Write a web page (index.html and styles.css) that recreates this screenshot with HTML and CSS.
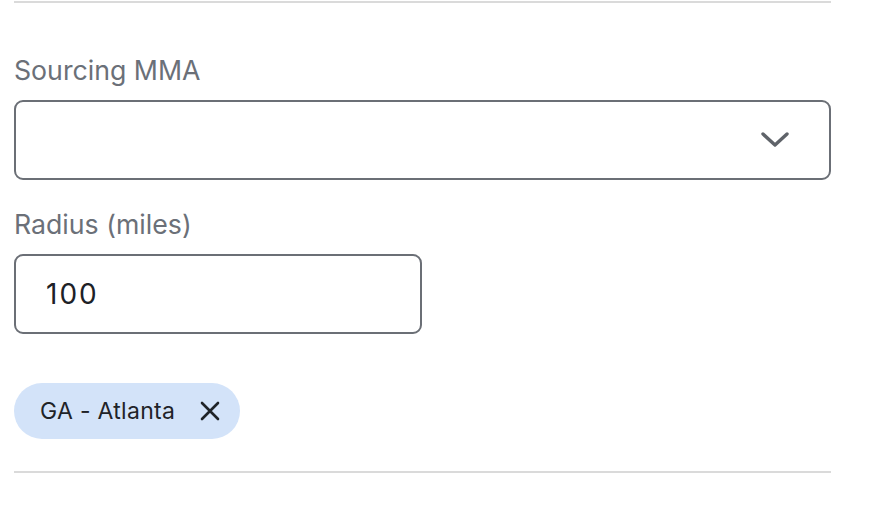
FILE: index.html
```html
<!DOCTYPE html>
<html>
<head>
<meta charset="utf-8">
<link rel="stylesheet" href="styles.css">
</head>
<body>
<div class="panel">
  <hr class="divider top">
  <div class="field first">
    <label class="label">Sourcing MMA</label>
    <div class="select">
      <svg class="chevron" width="30" height="18" viewBox="0 0 30 18"><path d="M3 3 L15 14 L27 3" fill="none" stroke="#5f6369" stroke-width="3.4" stroke-linecap="round" stroke-linejoin="round"/></svg>
    </div>
  </div>
  <div class="field">
    <label class="label">Radius (miles)</label>
    <div class="input">100</div>
  </div>
  <div class="chips">
    <span class="chip">GA - Atlanta
      <svg class="x" width="22" height="22" viewBox="0 0 22 22"><path d="M3 3 L19 19 M19 3 L3 19" stroke="#1f2328" stroke-width="2.6" stroke-linecap="round"/></svg>
    </span>
  </div>
  <hr class="divider bottom">
</div>
</body>
</html>
```
FILE: styles.css
```css
* { box-sizing: border-box; }
html, body { margin: 0; padding: 0; background: #fff; }
body { font-family: Inter, "Noto Sans", sans-serif; }
.panel { width: 817px; margin-left: 14px; padding-top: 1px; }
.divider { border: 0; height: 2px; background: #dadada; margin: 0; }
.field { display: flex; flex-direction: column; }
.field.first { margin-top: 51px; }
.field + .field { margin-top: 28px; }
.label { font-size: 26.7px; line-height: 32px; color: #6b7078; margin-bottom: 14px; }
.select {
  height: 80px; border: 2px solid #6b6f76; border-radius: 9px;
  display: flex; align-items: center; justify-content: flex-end; padding-right: 39px;
}
.chevron { display: block; }
.input {
  width: 408px; height: 80px; border: 2px solid #6b6f76; border-radius: 9px;
  display: flex; align-items: center; padding-left: 30px;
  font-size: 28px; letter-spacing: 2px; color: #1d2127;
}
.chips { margin-top: 49px; display: flex; }
.chip {
  display: inline-flex; align-items: center; gap: 24px;
  height: 56px; padding: 0 19px 0 26px; border-radius: 28px;
  background: #d3e3f9; color: #1f2328; font-size: 23px; letter-spacing: 0.3px;
}
.x { display: block; }
.divider.bottom { margin-top: 32px; }
```
